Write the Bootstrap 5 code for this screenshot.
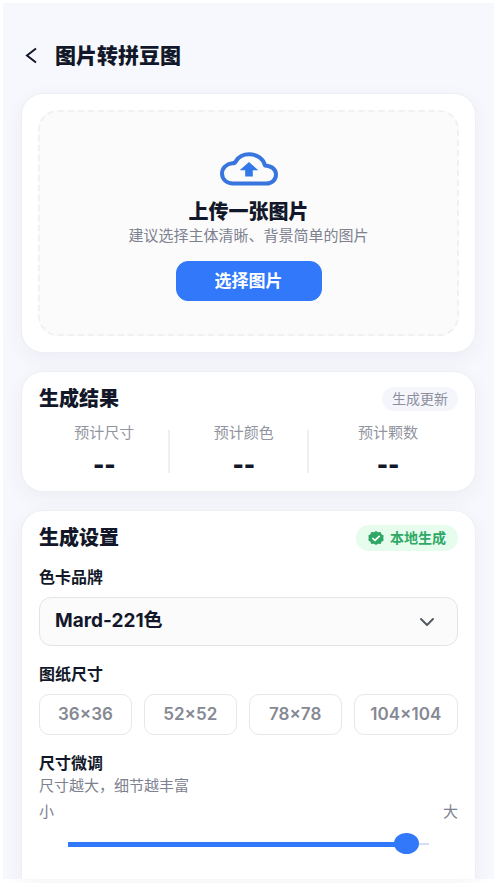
<!DOCTYPE html>
<html lang="zh-CN">
<head>
<meta charset="utf-8">
<meta name="viewport" content="width=device-width, initial-scale=1">
<title>图片转拼豆图</title>
<link href="https://cdn.jsdelivr.net/npm/bootstrap@5.3.0/dist/css/bootstrap.min.css" rel="stylesheet">
<style>
:root { --ink: #121829; --muted: #7d8190; --blue: #3178fb; }
body { font-family: Inter, "Noto Sans CJK SC", sans-serif; color: var(--ink); background: #fff; padding: 3px 3px 4px; }
.app-shell { min-height: calc(100vh - 7px); background: #f7f8fd; padding: 40px 18px 0; }
.app-bar { height: 26px; margin-bottom: 24px; gap: 16px; padding-left: 2px; }
.back-btn { width: 16px; height: 26px; color: var(--ink); }
.app-title { font-size: 21px; line-height: 26px; font-weight: 900; }
.panel { background: #fff; border: 1px solid #eeeff5; border-radius: 22px; box-shadow: 0 6px 20px rgba(40, 50, 90, .05); padding: 14px 17px 12px; }
.panel-upload { padding: 16px; }
.panel-last { border-bottom: 0; border-radius: 22px 22px 0 0; padding-bottom: 24px; }
.panels { gap: 18px; }
.drop-zone { border: 2px dashed #f1f1f3; border-radius: 20px; background: #fbfbfb; padding: 40px 12px 33px; }
.drop-title { font-size: 20px; line-height: 26px; font-weight: 900; margin-top: 13px; }
.drop-hint { font-size: 15px; line-height: 22px; color: var(--muted); margin-bottom: 14px; }
.pick-btn { --bs-btn-bg: var(--blue); --bs-btn-border-color: var(--blue); font-size: 17px; line-height: 24px; font-weight: 700; border-radius: 12px; padding: 7px 38px; }
.panel-title { font-size: 20px; line-height: 26px; font-weight: 900; }
.tag { font-size: 14px; line-height: 24px; border-radius: 13px; color: #8c909d; background: #f5f6fb; padding: 0 10px; }
.tag-ok { font-size: 14px; line-height: 26px; font-weight: 700; color: #2fa866; background: #e6fdee; padding: 0 12px; gap: 6px; }
.stats { display: grid; grid-template-columns: 14fr 14fr 15fr; column-gap: 9px; margin-top: 10px; }
.stat { position: relative; }
.stat-name { font-size: 15px; line-height: 22px; color: #92959f; }
.stat-value { font-size: 24px; line-height: 28px; font-weight: 900; margin-top: 7px; }
.stat + .stat::before { content: ""; position: absolute; left: -11px; top: 8px; bottom: 6px; width: 2px; background: #eeeff2; }
.field-name { font-size: 16px; line-height: 24px; font-weight: 700; }
.brand-name { margin: 14px 0 8px; }
.brand-select { --bs-form-select-bg-img: url("data:image/svg+xml,%3csvg xmlns='http://www.w3.org/2000/svg' viewBox='0 0 18 18'%3e%3cpath fill='none' stroke='%23555962' stroke-linecap='round' stroke-linejoin='round' stroke-width='2' d='m3 6 6 6 6-6'/%3e%3c/svg%3e"); height: 49px; border: 1px solid #e3e4ea; border-radius: 12px; background-color: #fbfbfc; background-position: right 21px center; background-size: 18px 18px; color: var(--ink); font-size: 19px; font-weight: 700; padding: 0 48px 0 15px; }
.sizes { display: grid; grid-template-columns: 8fr 8fr 8fr 9fr; gap: 12px; }
.size-btn { --bs-btn-color: #858993; --bs-btn-border-color: #e6e7eb; --bs-btn-hover-bg: #f5f8ff; --bs-btn-hover-color: var(--blue); border-radius: 10px; font-size: 17px; line-height: 25px; font-weight: 600; padding: 7px 0; }
.fine-text { font-size: 15px; line-height: 22px; color: var(--muted); }
.size-range { height: 22px; margin: 10px 29px 0; width: calc(100% - 58px); background: linear-gradient(var(--blue), var(--blue)) left center / var(--fill) 5px no-repeat, linear-gradient(#d3dff8, #d3dff8) center / 100% 2px no-repeat; }
.size-range::-webkit-slider-runnable-track { background: transparent; height: 22px; }
.size-range::-webkit-slider-thumb { background: var(--blue); width: 25px; height: 21px; border-radius: 50%; margin-top: 0; }
.size-range::-moz-range-track { background: transparent; }
.size-range::-moz-range-thumb { background: var(--blue); width: 25px; height: 21px; border-radius: 50%; }
</style>
<script src="https://cdn.jsdelivr.net/npm/bootstrap@5.3.0/dist/js/bootstrap.bundle.min.js"></script>
</head>
<body>
<div class="app-shell d-flex flex-column">
  <header class="app-bar d-flex align-items-center">
    <button type="button" class="back-btn btn p-0 border-0 d-flex align-items-center" aria-label="返回">
      <svg width="16" height="18" viewBox="0 0 16 18" fill="none" stroke="currentColor" stroke-width="2"><path d="M13 1.500 4 8.500l9 7"/></svg>
    </button>
    <h1 class="app-title mb-0">图片转拼豆图</h1>
  </header>

  <main class="panels d-flex flex-column flex-grow-1">
    <section class="panel panel-upload">
      <div class="drop-zone d-flex flex-column align-items-center text-center">
        <svg width="58" height="34" viewBox="0 0 58 34" fill="none" aria-hidden="true">
          <path d="M13 31.500C6.500 31.500 2 27.200 2 21.600c0-5.600 4.300-9.700 10.300-10.300 1.800 0 2.800-.7 3.700-2.200C18.600 4.900 23.200 2.300 29 2.300c8.200 0 14.600 4.800 15.900 11.100C51.500 13.600 56 17.400 56 22.500c0 5.200-4 9-9.700 9z" stroke="#3875df" stroke-width="4" stroke-linejoin="round"/>
          <path d="m29 10 9.300 8.200h-5.500v6.300h-7.600v-6.300h-5.500z" fill="#3178e8"/>
        </svg>
        <h2 class="drop-title mb-0">上传一张图片</h2>
        <p class="drop-hint">建议选择主体清晰、背景简单的图片</p>
        <button type="button" class="pick-btn btn btn-primary">选择图片</button>
      </div>
    </section>

    <section class="panel">
      <div class="d-flex justify-content-between align-items-center">
        <h2 class="panel-title mb-0">生成结果</h2>
        <span class="tag">生成更新</span>
      </div>
      <div class="stats text-center">
        <div class="stat"><div class="stat-name">预计尺寸</div><div class="stat-value">--</div></div>
        <div class="stat"><div class="stat-name">预计颜色</div><div class="stat-value">--</div></div>
        <div class="stat"><div class="stat-name">预计颗数</div><div class="stat-value">--</div></div>
      </div>
    </section>

    <section class="panel panel-last flex-grow-1">
      <div class="d-flex justify-content-between align-items-center">
        <h2 class="panel-title mb-0">生成设置</h2>
        <span class="tag tag-ok d-flex align-items-center">
          <svg width="16" height="14" viewBox="0 0 24 22" preserveAspectRatio="none" aria-hidden="true"><path fill="#2fa866" d="m12 0 3 2 4-.3 1.300 3.400L23.500 7 23 11l.5 4-3.200 1.900L19 20.300l-4-.3-3 2-3-2-4 .3-1.300-3.400L.5 15 1 11 .5 7l3.200-1.900L5 1.700 9 2z"/><path fill="none" stroke="#fff" stroke-width="2.600" d="m6.500 11 4 3.600 7-7"/></svg>
          本地生成
        </span>
      </div>

      <label for="brand" class="field-name brand-name d-block">色卡品牌</label>
      <select id="brand" class="brand-select form-select">
        <option>Mard-221色</option>
      </select>

      <div id="sizes-name" class="field-name mt-3 mb-2">图纸尺寸</div>
      <div class="sizes" role="group" aria-labelledby="sizes-name">
        <button type="button" class="size-btn btn">36×36</button>
        <button type="button" class="size-btn btn">52×52</button>
        <button type="button" class="size-btn btn">78×78</button>
        <button type="button" class="size-btn btn">104×104</button>
      </div>

      <label for="fine" class="field-name d-block mt-3">尺寸微调</label>
      <div class="fine-text">尺寸越大，细节越丰富</div>
      <div class="fine-text d-flex justify-content-between mt-1"><span>小</span><span>大</span></div>
      <input id="fine" type="range" class="size-range form-range d-block" min="0" max="100" value="97" style="--fill: 97%">
    </section>
  </main>
</div>
<script>
const fine = document.getElementById('fine');
fine.addEventListener('input', () => fine.style.setProperty('--fill', fine.value + '%'));
</script>
</body>
</html>
